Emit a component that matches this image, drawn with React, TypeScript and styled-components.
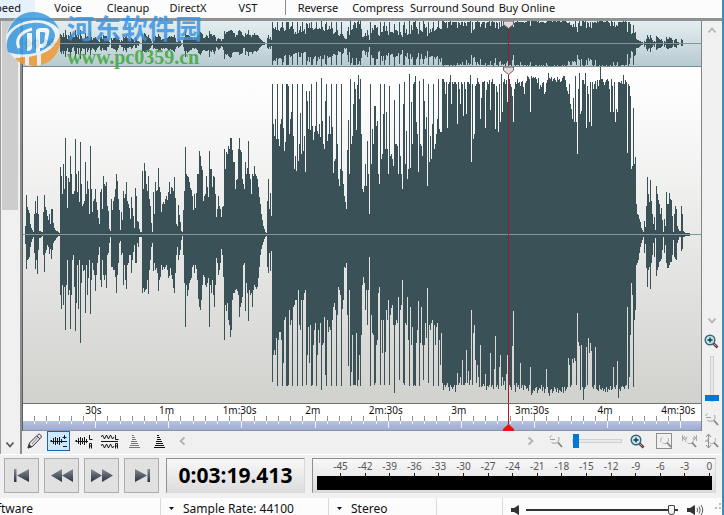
import React from 'react';
import styled, { createGlobalStyle, css } from 'styled-components';

/* Peaks per pixel column: each row is its first column, then "above/below" pairs. */
const PEAKS: [number, string][] = [
  [25, '8/9 39/34 27/25 24/24 21/22 10/12 6/7 4/4 2/2 20/18 33/34 21/25 38/39 20/15 3/3'],
  [40, '3/3 2/2 2/1 22/20 39/37 27/18 24/15 18/10 14/12 20/19 10/14 25/24 25/15 11/8 6/6'],
  [55, '4/5 3/3 3/2 2/1 1/1 67/60 58/74 40/50 70/70 45/52 96/95 58/50 26/25 56/60 52/55'],
  [70, '78/94 60/60 40/25 40/20 43/52 95/96 60/68 42/30 63/74 32/25 92/108 50/48 28/30 30/36 33/35'],
  [85, '72/78 40/30 53/60 45/43 20/25 88/79 45/45 22/28 33/35 35/40 45/56 32/40 24/28 16/20 10/12'],
  [100, '42/45 45/52 25/25 58/40 50/45 48/40 52/53 28/20 23/18 5/8 3/2 35/32 24/32 33/35 37/35'],
  [115, '45/42 60/58 53/40 35/28 24/8 4/6 22/20 14/18 43/50 36/30 40/45 52/54 33/30 30/28 26/20'],
  [130, '15/20 37/38 26/25 18/17 6/10 46/28 38/28 13/8 12/12 5/2 2/2 2/2 63/58 45/53 71/57'],
  [145, '63/55 50/54 43/45 58/59 35/35 28/25 11/12 2/8 42/36 20/28 52/35 43/33 44/38 66/56 47/45'],
  [160, '42/42 22/30 30/35 32/32 30/34 35/32 38/30 34/35 42/43 52/41 40/33 47/40 46/44 43/53 57/58'],
  [175, '36/38 10/20 8/12 29/25 19/20 12/15 3/5 2/1 24/20 43/48 87/92 60/50 58/61 57/55 52/48'],
  [190, '46/45 44/43 38/32 24/30 40/38 26/30 41/34 60/45 60/64 83/72 78/75 68/65 64/50 33/40 38/42'],
  [205, '40/50 58/52 47/48 37/43 83/92 65/50 65/58 47/45 58/60 57/72 40/50 17/23 25/28 38/40 28/35'],
  [220, '25/28 17/14 27/20 28/42 85/105 65/70 82/76 80/68 88/85 85/90 96/102 96/95 84/65 72/58 72/58'],
  [235, '45/55 54/54 55/56 85/60 96/82 84/72 82/68 55/62 50/30 45/28 72/76 60/48 66/58 93/86 60/55'],
  [250, '55/60 40/58 60/72 58/55 68/50 60/52 58/54 55/52 47/43 37/32 30/20 20/14 14/10 8/7 5/4'],
  [265, '2/2 1/1 33/32 55/38 25/18 41/36 18/16 150/147 110/120 98/115 115/120 95/103 150/151 95/105 88/97'],
  [280, '110/97 115/105 150/151 106/128 83/85 92/82 150/151 150/151 148/150 100/75 115/90 122/85 150/151 98/72 65/70'],
  [295, '78/65 63/65 150/151 73/55 90/90 121/95 80/65 150/151 83/65 98/58 62/55 143/150 133/120 105/92 143/128'],
  [310, '104/90 150/151 108/150 94/110 102/95 108/88 152/151 103/120 100/95 110/108 97/88 156/155 113/110 90/108 85/82'],
  [325, '133/140 150/151 93/85 100/97 118/92 100/95 150/151 107/85 61/72 73/68 75/75 150/151 90/80 55/52 48/55'],
  [340, '65/60 150/151 63/74 50/65 38/32 32/33 25/28 84/80 114/131 60/55 155/151 90/137 98/100 130/150 152/150'],
  [355, '145/150 104/98 149/151 159/145 135/120 155/151 100/100 45/50 42/42 48/48 70/75 48/55 93/90 60/55 20/22'],
  [370, '150/151 70/80 105/98 90/100 128/150 128/148 108/110 113/105 60/58 50/52 150/150 75/85 80/118 120/85 150/150'],
  [385, '85/117 122/75 85/85 60/65 148/150 78/80 80/73 75/70 68/90 134/158 90/90 90/85 88/88 60/62 150/145'],
  [400, '78/75 60/70 45/45 130/148 152/150 70/88 103/90 55/62 65/105 160/151 66/72 132/110 90/92 150/151 152/150'],
  [415, '158/151 112/108 100/95 62/66 153/151 90/108 88/72 78/110 155/145 133/110 105/88 117/103 48/53 150/148 72/90'],
  [430, '98/95 75/88 110/85 150/151 85/90 90/110 100/92 115/88 155/151 105/105 102/130 102/98 155/148 155/155 152/150'],
  [445, '140/152 152/150 106/148 150/152 152/156 159/150 130/152 152/154 150/152 152/150 152/157 150/150 110/138 152/150 145/148'],
  [460, '130/142 152/150 150/125 118/150 152/150 145/148 120/115 152/148 152/136 150/150 159/145 72/75 150/150 95/98 100/90'],
  [475, '148/125 150/148 156/130 152/142 150/152 115/110 136/152 152/151 152/149 153/151 106/139 144/155 152/151 150/152 154/150'],
  [490, '124/118 152/152 155/150 150/154 150/134 105/101 148/152 142/150 102/154 150/132 112/120 160/151 122/142 152/150 155/146'],
  [505, '150/155 154/139 132/120 158/154 155/150 150/152 147/155 138/111 112/76 145/150 152/157 150/148 155/152 151/150 152/154'],
  [520, '148/128 152/153 153/150 147/155 140/150 151/151 153/154 158/153 157/156 155/150 122/132 158/160 156/158 157/155 156/156'],
  [535, '157/153 155/152 151/158 156/155 145/153 149/154 147/150 151/156 152/152 140/158 142/154 151/134 154/152 161/158 156/161'],
  [550, '155/155 157/154 153/158 155/156 156/152 154/154 152/157 157/153 154/158 155/155 152/156 153/157 156/152 158/158 158/152'],
  [565, '154/156 147/154 143/152 140/123 150/130 130/152 125/150 115/124 136/128 112/123 158/126 112/150 80/78 145/107 161/111'],
  [580, '120/155 123/110 154/152 154/165 150/154 161/152 106/112 148/150 140/103 112/118 152/108 108/116 152/152 145/154 150/150'],
  [595, '153/112 145/154 154/155 148/156 154/150 167/154 155/155 155/153 152/156 149/154 152/157 154/152 155/157 153/154 145/155'],
  [610, '122/151 155/155 148/154 122/132 152/152 112/154 125/150 122/126 152/163 152/154 151/156 153/152 150/151 159/152 150/154'],
  [625, '154/151 152/150 81/72 150/154 148/142 138/100 65/48 68/60 126/152 70/85 77/75 30/30 20/28 19/25 15/18'],
  [640, '12/12 6/8 4/5 2/2 13/18 7/9 28/33 57/52 40/35 32/32 54/54 33/28 20/20 10/8 17/22'],
  [655, '4/3 48/41 40/35 34/32 30/27 20/26 26/24 14/15 2/2 15/18 8/10 42/28 30/33 30/33 41/30'],
  [670, '35/27 34/27 18/20 2/5 20/22 28/24 25/25 8/8 5/5 3/2 3/2 28/16 20/14 3/2 2/2'],
  [685, '1/1 1/1 1/1 1/1 1/1'],
];

const SPAN = 678;
const ORIGIN = 23;

function wavePath(centre: number, scale: number) {
  return PEAKS.map(([start, row]) =>
    row
      .split(' ')
      .map((pair, i) => {
        const [up, down] = pair.split('/').map(n => Math.round(Number(n) * scale));
        return `M${start - ORIGIN + i} ${centre - up}h1V${centre + down + 1}h-1z`;
      })
      .join(''),
  ).join('');
}

const Global = createGlobalStyle`
  * { box-sizing: border-box; }
  body { margin: 0; background: #f0f0f0; color: #111; font-family: "Noto Sans", "Open Sans", sans-serif; font-size: 12px; }
  button { font: inherit; color: inherit; padding: 0; border: 0; background: none; }
  svg { display: block; flex: none; }
`;

const Window = styled.div`
  display: flex;
  flex-direction: column;
  height: 100vh;
  overflow: hidden;
  border-right: 2px solid #3c8dbc;
  position: relative;
`;
const Menu = styled.nav`
  display: flex;
  flex: none;
  height: 18px;
  background: #fcfcfc;
`;
const MenuItem = styled.button<{ $current?: boolean }>`
  flex: none;
  display: flex;
  align-items: flex-start;
  justify-content: center;
  height: 18px;
  min-width: 60px;
  padding: 0 2px;
  font-size: 11px;
  line-height: 16px;
  white-space: nowrap;
  ${p => p.$current && css`
    min-width: 0;
    width: 35px;
    margin-right: 3px;
    padding: 0 14px 0 0;
    justify-content: flex-end;
    overflow: hidden;
    background: #e5f1fb;
  `}
`;
const MenuRule = styled.span`
  width: 1px;
  height: 15px;
  margin: 0 2px 0 7px;
  background: #8c8c8c;
`;
const Main = styled.main`
  flex: 1;
  min-height: 0;
  display: flex;
  border-top: 3px solid #8f9292;
  border-bottom: 1px solid #fff;
`;
const ScrollRail = styled.div`
  flex: none;
  display: flex;
  flex-direction: column;
  align-items: center;
  justify-content: space-between;
  width: 22px;
  padding: 0 2px 4px 1px;
  border-left: 1px solid #9a9a9a;
  border-right: 2px solid #8a8e8e;
`;
const ScrollThumb = styled.div`
  width: 16px;
  height: 44%;
  background: #cdcdcd;
`;
const Editor = styled.section`
  flex: 1;
  min-width: 0;
  display: flex;
  flex-direction: column;
`;
const Stage = styled.div`
  flex: 1;
  min-height: 0;
  display: flex;
`;
const Tracks = styled.div`
  flex: 1;
  min-width: 0;
  display: flex;
  flex-direction: column;
  border-left: 1px solid #5c6262;
  border-right: 1px solid #7f8484;
`;
const Pane = styled.div<{ $overview?: boolean }>`
  position: relative;
  min-height: 0;
  ${p => p.$overview
    ? css`flex: none; height: 46px; background: linear-gradient(#e4eef0, #b8cbd0); border-bottom: 1px solid #7b8d92;`
    : css`flex: 1; background: linear-gradient(#ffffff, #fafafa 14%, #d1d2ce); border-bottom: 1px solid #6f7370;`}
  > svg:first-child { width: 100%; height: 100%; }
`;
const Playhead = styled.div`
  position: absolute;
  top: 0;
  bottom: 0;
  left: 71.5%;
  width: 1px;
  background: #9c1c2a;
  svg { position: absolute; top: 0; left: -5px; }
`;
const Ruler = styled.div`
  flex: none;
  position: relative;
  height: 27px;
  background: linear-gradient(#fff 17px, #b9c4e2 17px, #9eabcf);
  border-bottom: 1px solid #8c94aa;
`;
const RulerLabels = styled.div`
  display: flex;
  overflow: hidden;
  padding-left: 5%;
  font-size: 10px;
  line-height: 13px;
`;
const RulerLabel = styled.span`
  flex: none;
  width: 11.35%;
  text-align: center;
`;
const RulerTicks = styled.svg`
  position: absolute;
  inset: 0;
  width: 100%;
  height: 26px;
`;
const RulerCursor = styled(Playhead)`
  background: #c31420;
  svg { top: auto; bottom: -1px; }
`;
const ZoomRail = styled.div`
  flex: none;
  display: flex;
  flex-direction: column;
  align-items: center;
  width: 20px;
  padding: 5px 1px 3px 0;
`;
const Grow = styled.span`
  flex: 1;
`;
const Toolbar = styled.div`
  flex: none;
  display: flex;
  align-items: flex-start;
  height: 23px;
`;
const Tool = styled.button<{ $on?: boolean; $width?: number }>`
  flex: none;
  display: flex;
  align-items: center;
  justify-content: center;
  width: ${p => p.$width ?? 25}px;
  height: 20px;
  ${p => p.$on && css`
    background: #cce8ff;
    border: 1px solid #1a66a8;
  `}
`;
const RailTool = styled(Tool)`
  width: 18px;
  height: 18px;
`;
const RailZoomIn = styled(RailTool)`
  margin-top: 6px;
`;
const track = css`
  appearance: none;
  margin: 0;
  background: transparent;
`;
const ZoomSlider = styled.input`
  ${track}
  flex: none;
  width: 50px;
  height: 20px;
  &::-webkit-slider-runnable-track { height: 4px; background: #e7eaea; border: 1px solid #d0d0d0; }
  &::-webkit-slider-thumb { appearance: none; width: 6px; height: 14px; margin-top: -6px; background: #0078d7; }
`;
const RailSlider = styled.input`
  ${track}
  flex: none;
  writing-mode: vertical-lr;
  direction: rtl;
  width: 16px;
  height: 46px;
  margin: 6px 0 8px;
  &::-webkit-slider-runnable-track { width: 4px; background: #e7eaea; border: 1px solid #d0d0d0; }
  &::-webkit-slider-thumb { appearance: none; width: 14px; height: 6px; margin-left: -6px; background: #0078d7; }
`;
const Transport = styled.section`
  flex: none;
  display: flex;
  align-items: center;
  height: 43px;
  padding: 2px 6px 4px 4px;
`;
const TransportButton = styled.button`
  flex: none;
  display: flex;
  align-items: center;
  justify-content: center;
  width: 35px;
  height: 35px;
  margin-right: 5px;
  background: #e1e1e1;
  border: 1px solid #adadad;
`;
const panel = css`
  height: 35px;
  border: 1px solid #d8d8d8;
  border-top-color: #8f8f8f;
  border-left-color: #8f8f8f;
  background: linear-gradient(#f8f8f8, #dcdcdc);
`;
const Clock = styled.output`
  ${panel}
  flex: none;
  width: 139px;
  margin: 0 7px 0 2px;
  text-align: center;
  font-size: 21px;
  line-height: 33px;
  font-weight: 700;
  color: #000;
`;
const Meter = styled.div`
  ${panel}
  flex: 1;
  min-width: 0;
  padding: 1px 3px 0 4px;
`;
const MeterScale = styled.div`
  display: flex;
  justify-content: space-between;
  padding-left: 21px;
  font-size: 10px;
  line-height: 13px;
  color: #555;
`;
const MeterMark = styled.span`
  display: flex;
  flex-direction: column;
  align-items: center;
  width: 5px;
  &::after { content: ""; width: 1px; height: 3px; background: #222; }
`;
const MeterBar = styled.div`
  height: 14px;
  background: #000;
`;
const Status = styled.footer`
  flex: none;
  display: flex;
  align-items: center;
  height: 17px;
  background: #fcfcfc;
  line-height: 20px;
  overflow: hidden;
`;
const StatusCell = styled.div<{ $width: number }>`
  flex: none;
  display: flex;
  align-items: center;
  width: ${p => p.$width}px;
  height: 17px;
  padding-top: 4px;
  white-space: nowrap;
  border-right: 1px solid #dadada;
`;
const Clipped = styled.span`
  display: flex;
  justify-content: flex-end;
  width: 33px;
  overflow: hidden;
`;
const StatusChoice = styled.button`
  display: flex;
  align-items: center;
  gap: 9px;
  padding-left: 8px;
  line-height: 20px;
`;
const Volume = styled.div`
  flex: 1;
  display: flex;
  align-items: center;
  padding: 6px 10px 0 8px;
`;
const VolumeSlider = styled.input`
  ${track}
  flex: 1;
  min-width: 0;
  height: 12px;
  margin: 0 9px 0 7px;
  &::-webkit-slider-runnable-track { height: 2px; background: #333; }
  &::-webkit-slider-thumb { appearance: none; width: 7px; height: 10px; margin-top: -4px; background: #f4f4f4; border: 1px solid #444; border-radius: 1px 1px 3px 3px; }
`;
const Watermark = styled.div`
  position: absolute;
  top: 10px;
  left: 5px;
  display: flex;
  align-items: flex-start;
  gap: 5px;
  opacity: 0.85;
  pointer-events: none;
`;
const WatermarkText = styled.div`
  display: flex;
  flex-direction: column;
  gap: 3px;
  padding-top: 4px;
`;
const SiteName = styled.span`
  font: 700 27px/28px "Noto Sans CJK SC", sans-serif;
  color: #3d94e0;
`;
const SiteUrl = styled.span`
  font: 700 20px/24px "Liberation Serif", serif;
  color: #3fa83c;
`;

const Wave = ({ height, centre, scale }: { height: number; centre: number; scale: number }) => (
  <svg viewBox={`0 0 ${SPAN} ${height}`} preserveAspectRatio="none" shapeRendering="crispEdges">
    <path d={wavePath(centre, scale)} fill="#3b5158" />
    <path d={`M0 ${centre}h${SPAN}v1h-${SPAN}z`} fill="#82979d" />
  </svg>
);

const Handle = () => (
  <svg width="11" height="8" viewBox="0 0 11 8">
    <path d="M.5 0v3.5L5.5 7.5l5-4V0z" fill="#e4dcdc" stroke="#696060" />
  </svg>
);

const Chevron = ({ d, color = '#b0b0b0' }: { d: 'up' | 'down' | 'left' | 'right'; color?: string }) => {
  const paths = {
    up: 'M1.5 6.5l3.5-4 3.5 4',
    down: 'M1.5 2.5l3.5 4 3.5-4',
    left: 'M6.5 1.5l-4 3.5 4 3.5',
    right: 'M2.5 1.5l4 3.5-4 3.5',
  };
  return (
    <svg width="10" height="10" viewBox="0 0 10 10" fill="none" stroke={color} strokeWidth="1.7">
      <path d={paths[d]} />
    </svg>
  );
};

const ZoomIn = () => (
  <svg width="15" height="15" viewBox="0 0 15 15">
    <path d="M9 9l4.5 4.5" stroke="#5b3a36" strokeWidth="2.6" />
    <path d="M9 9l3.5 3.5" stroke="#c6a096" />
    <circle cx="6" cy="6" r="4.8" fill="#c3e6ec" stroke="#37687a" strokeWidth="1.4" />
    <path d="M3.5 6h5M6 3.5v5" stroke="#12343c" strokeWidth="1.3" />
  </svg>
);

const Lens = ({ kind }: { kind: 'out' | 'fit' | 'wide' | 'tall' }) => (
  <svg width="17" height="16" viewBox="0 0 17 16" fill="none" stroke="#ababab">
    {kind === 'fit' && <rect x=".5" y=".5" width="15" height="15" stroke="#8f8f8f" />}
    {kind === 'wide' && <path d="M1.5 2v6M2 5h4M4 3L2 5l2 2M15.5 2v6M15 5h-3M13 3l2 2-2 2" />}
    {kind === 'tall' && <path d="M5.5 1v14M3 4l2.500-3L8 4M3 12l2.500 3L8 12M2 8h4" stroke="#8e8e8e" />}
    {kind === 'out'
      ? <path d="M3 5c0-1 .5-2 1.500-2.500M11.500 4c1 2 .5 4-1 5.500-2 1-4 1-6 0M3 6.500h5" stroke="#9d9d9d" />
      : <path d="M5 9c-1-2 0-4 1.500-5M12 5c1 2 .5 3.500-1 5-1.500.8-3 .8-4.500 0" />}
    <path d="M11 9.500l4 4.500" stroke="#858585" strokeWidth="1.8" />
  </svg>
);

const Squiggle = ({ y }: { y: number }) => (
  <path d={`M0 ${y}h1M1.5 ${y - 1}v2M3.5 ${y - 3}v6M5.5 ${y - 4}v8M7.5 ${y - 3}v6M9.5 ${y - 4}v8M11.5 ${y - 2}v4M1 ${y + 0.5}h12`} />
);

const WaveIcon = ({ kind }: { kind: 'mono' | 'split' | 'stereo' }) => (
  <svg width="18" height="15" viewBox="0 0 18 15" fill="none" stroke="#15181a">
    {kind === 'stereo' ? (
      <>
        <path d="M0 3l1.500-2 2 4 2-4 2 4 2-4 2 4 1.500-2M0 12l1.500-2 2 4 2-4 2 4 2-4 2 4 1.500-2" />
        <path d="M0 7.500h17" />
      </>
    ) : (
      <Squiggle y={7} />
    )}
    {kind === 'mono'
      ? <path d="M12 7.500h5M14.500 1v4M12.500 3.500h4M13 12.500h4" />
      : <path d="M14.500 1v4.500h3M14.500 14.500v-5h2v2.500h-2M16.500 12v2.500" />}
  </svg>
);

const Levels = ({ bold }: { bold?: boolean }) => (
  <svg width="13" height="15" viewBox="0 0 13 15" stroke={bold ? '#111' : '#777'}>
    <path d="M4 1.500h2M4 3.500h3M4 5.500h4M3 7.500h6M3 9.500h7M2 11.500h9M1 13.500h11" />
  </svg>
);

const Pencil = () => (
  <svg width="16" height="16" viewBox="0 0 16 16">
    <path d="M1 15l1.500-5L11 1.500c1.500-1 4 1 3 3L6 13z" fill="#e6e6e6" stroke="#333" />
    <path d="M1 15l1-3.500L4.500 14zM10 3l3 3" fill="#222" stroke="#444" />
    <path d="M5 11l6-7" stroke="#888" />
  </svg>
);

const TransportIcon = ({ kind }: { kind: 'start' | 'back' | 'forward' | 'end' }) => {
  const shapes = {
    start: 'M3 4h2.500v13H3zM18 4v13L6 10.500z',
    back: 'M11 4v13L0 10.500zM22 4v13l-11-6.500z',
    forward: 'M0 4v13l11-6.500zM11 4v13l11-6.500z',
    end: 'M4 4v13l12-6.500zM16.500 4H19v13h-2.500z',
  };
  return (
    <svg width="22" height="21" viewBox="0 0 22 21">
      <defs>
        <linearGradient id={`steel-${kind}`} x2="0" y2="1">
          <stop offset="0" stopColor="#858c98" />
          <stop offset="1" stopColor="#2b313d" />
        </linearGradient>
      </defs>
      <path d={shapes[kind]} fill={`url(#steel-${kind})`} />
    </svg>
  );
};

const Speaker = ({ loud }: { loud?: boolean }) => (
  <svg width={loud ? 17 : 8} height="12" viewBox={loud ? '0 0 17 12' : '0 0 8 12'} fill="none" stroke="#555">
    <path d="M0 4h3l5-3v10L3 8H0z" fill="#333" stroke="none" />
    {loud && <path d="M10 4q1.500 2 0 4M12 2.500q2.500 3.500 0 7M14 1q3.500 5 0 10" />}
  </svg>
);

const Caret = () => (
  <svg width="5" height="3" viewBox="0 0 5 3"><path d="M0 0h5L2.500 3z" fill="#111" /></svg>
);

const Grip = () => (
  <svg width="8" height="8" viewBox="0 0 8 8" fill="#bcbcbc">
    <path d="M5 0h2v2H5zM5 4h2v2H5zM1 4h2v2H1z" />
  </svg>
);

const SiteLogo = () => (
  <svg width="57" height="57" viewBox="0 0 57 57">
    <circle cx="28" cy="29" r="27" fill="#eef5f8" />
    <path d="M2 24C6 10 16 2 28 2c12 0 22 7 26 17-6-6-14-9-22-9C19 10 8 15 2 24z" fill="#3d9ce0" />
    <path d="M3 42C-2 27 10 14 28 13c12-1 21 4 22 12 0 9-11 17-25 19-9 1-17 0-22-2z" fill="#3d9ce0" />
    <path d="M14 38c-4-8 1-16 13-19" fill="none" stroke="#f6fafc" strokeWidth="3" />
    <path d="M22 23h5v14c0 3-2 4-5 4zM31 43V22c0-3 2-4 5-4h4c4 0 5 2 4 6l-2 9c-1 4-3 5-7 5v4zM35 34c3 0 4-1 4-3l1-6c1-2 0-3-2-3h-3z" fill="#f6fafc" fillRule="evenodd" />
    <path d="M10 48c5 0 7-1 10-1v8c-4-1-8-4-10-7zM24 47l8-2v11c-3 0-5 0-8-1zM36 44c9-3 16-9 19-20 2 15-5 27-19 31z" fill="#f09a35" />
  </svg>
);

const times = ['30s', '1m', '1m:30s', '2m', '2m:30s', '3m', '3m:30s', '4m', '4m:30s'];
const ticks = Array.from({ length: 54 }, (_, i) => i + 1);
const decibels = Array.from({ length: 16 }, (_, i) => i * 3 - 45);
const effects = ['Voice', 'Cleanup', 'DirectX', 'VST'];
const actions = ['Reverse', 'Compress', 'Surround Sound', 'Buy Online'];

export default function App() {
  return (
    <>
      <Global />
      <Window>
        <Menu>
          <MenuItem $current>Speed</MenuItem>
          {effects.map(name => <MenuItem key={name}>{name}</MenuItem>)}
          <MenuRule />
          {actions.map(name => <MenuItem key={name}>{name}</MenuItem>)}
        </Menu>
        <Main>
          <ScrollRail>
            <ScrollThumb />
            <Chevron d="down" color="#555" />
          </ScrollRail>
          <Editor>
            <Stage>
              <Tracks>
                <Pane $overview>
                  <Wave height={45} centre={22} scale={0.14} />
                  <Playhead><Handle /></Playhead>
                </Pane>
                <Pane>
                  <Wave height={336} centre={167} scale={1} />
                  <Playhead><Handle /></Playhead>
                </Pane>
                <Ruler>
                  <RulerLabels>
                    {times.map(t => <RulerLabel key={t}>{t}</RulerLabel>)}
                  </RulerLabels>
                  <RulerTicks viewBox={`0 0 ${SPAN} 26`} preserveAspectRatio="none" shapeRendering="crispEdges">
                    {ticks.map(n => {
                      const x = Math.round(n * 12.19 - 1);
                      const major = n % 6 === 0;
                      return (
                        <g key={n}>
                          <path d={`M${x} ${major ? 10 : 12}h1v${major ? 7 : 5}h-1z`} fill="#8f8f8f" />
                          <path d={`M${x} 17h1v${major ? 7 : 3}h-1z`} fill="#f4f6fc" />
                        </g>
                      );
                    })}
                  </RulerTicks>
                  <RulerCursor>
                    <svg width="11" height="7" viewBox="0 0 11 7"><path d="M5.500 0L11 5v2H0V5z" fill="#f01010" /></svg>
                  </RulerCursor>
                </Ruler>
              </Tracks>
              <ZoomRail>
                <Chevron d="up" />
                <Grow />
                <Chevron d="down" />
                <RailZoomIn aria-label="Zoom in vertically"><ZoomIn /></RailZoomIn>
                <RailSlider type="range" aria-label="Vertical zoom" defaultValue={0} />
                <RailTool aria-label="Zoom out vertically"><Lens kind="out" /></RailTool>
              </ZoomRail>
            </Stage>
            <Toolbar>
              <Tool aria-label="Pencil"><Pencil /></Tool>
              <Tool $on $width={23} aria-label="Mixed waveform"><WaveIcon kind="mono" /></Tool>
              <Tool $width={27} aria-label="Overlaid channels"><WaveIcon kind="split" /></Tool>
              <Tool aria-label="Separate channels"><WaveIcon kind="stereo" /></Tool>
              <Tool aria-label="Normal scale"><Levels /></Tool>
              <Tool aria-label="Logarithmic scale"><Levels bold /></Tool>
              <Tool $width={21} aria-label="Scroll left"><Chevron d="left" /></Tool>
              <Grow />
              <Tool $width={16} aria-label="Scroll right"><Chevron d="right" /></Tool>
              <Tool $width={33} aria-label="Zoom out"><Lens kind="out" /></Tool>
              <ZoomSlider type="range" aria-label="Horizontal zoom" defaultValue={0} />
              <Tool $width={30} aria-label="Zoom in"><ZoomIn /></Tool>
              <Tool $width={25} aria-label="Zoom to selection"><Lens kind="fit" /></Tool>
              <Tool $width={24} aria-label="Zoom full width"><Lens kind="wide" /></Tool>
              <Tool $width={21} aria-label="Zoom full height"><Lens kind="tall" /></Tool>
            </Toolbar>
          </Editor>
        </Main>
        <Transport>
          <TransportButton aria-label="Go to start"><TransportIcon kind="start" /></TransportButton>
          <TransportButton aria-label="Rewind"><TransportIcon kind="back" /></TransportButton>
          <TransportButton aria-label="Fast forward"><TransportIcon kind="forward" /></TransportButton>
          <TransportButton aria-label="Go to end"><TransportIcon kind="end" /></TransportButton>
          <Clock>0:03:19.413</Clock>
          <Meter>
            <MeterScale>
              {decibels.map(db => <MeterMark key={db}>{db}</MeterMark>)}
            </MeterScale>
            <MeterBar />
          </Meter>
        </Transport>
        <Status>
          <StatusCell $width={161}><Clipped>Software</Clipped></StatusCell>
          <StatusCell $width={168}><StatusChoice><Caret />Sample Rate: 44100</StatusChoice></StatusCell>
          <StatusCell $width={108}><StatusChoice><Caret />Stereo</StatusChoice></StatusCell>
          <StatusCell $width={66} />
          <Volume>
            <Speaker />
            <VolumeSlider type="range" aria-label="Volume" defaultValue={98} />
            <Speaker loud />
          </Volume>
          <Grip />
        </Status>
        <Watermark>
          <SiteLogo />
          <WatermarkText>
            <SiteName>河东软件园</SiteName>
            <SiteUrl>www.pc0359.cn</SiteUrl>
          </WatermarkText>
        </Watermark>
      </Window>
    </>
  );
}
